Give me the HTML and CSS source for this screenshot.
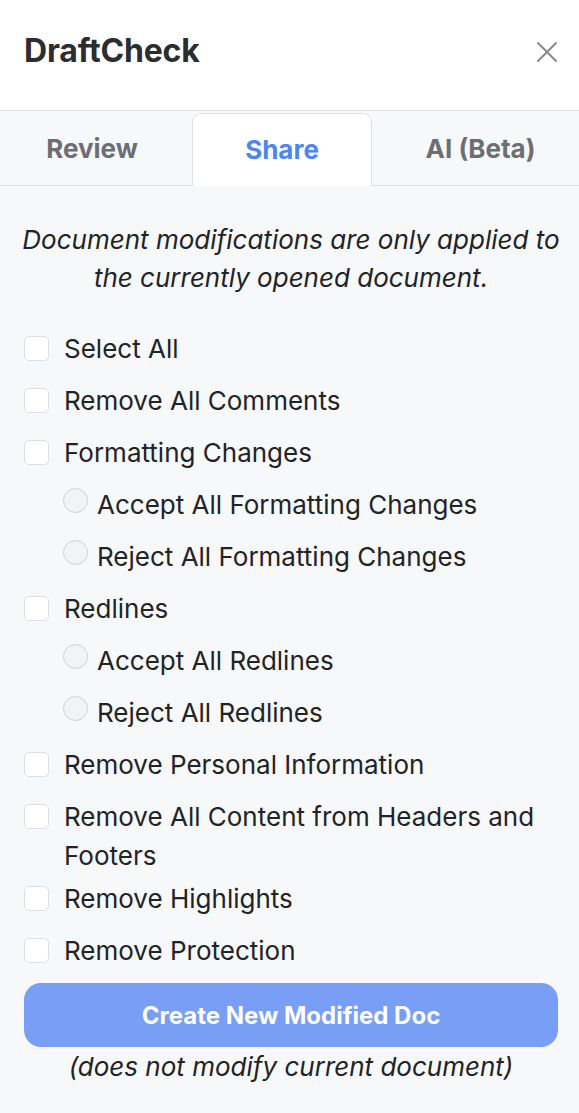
FILE: index.html
```html
<!DOCTYPE html>
<html lang="en">
<head>
<meta charset="utf-8">
<title>DraftCheck</title>
<link rel="stylesheet" href="styles.css">
</head>
<body>
<div class="panel">
  <header class="header">
    <h1 class="title">DraftCheck</h1>
    <button class="close" aria-label="Close">
      <svg width="22" height="22" viewBox="0 0 22 22"><path d="M2 2 L20 20 M20 2 L2 20" stroke="#8a8a8a" stroke-width="2" stroke-linecap="round"/></svg>
    </button>
  </header>
  <nav class="tabs">
    <div class="tab tab-review">Review</div>
    <div class="tab tab-share active">Share</div>
    <div class="tab tab-ai">AI (Beta)</div>
  </nav>
  <main class="content">
    <p class="note">Document modifications are only applied to the currently opened document.</p>
    <ul class="options">
      <li class="opt"><span class="box"></span><span class="label">Select All</span></li>
      <li class="opt"><span class="box"></span><span class="label">Remove All Comments</span></li>
      <li class="opt"><span class="box"></span><span class="label">Formatting Changes</span></li>
      <li class="opt sub"><span class="radio"></span><span class="label">Accept All Formatting Changes</span></li>
      <li class="opt sub"><span class="radio"></span><span class="label">Reject All Formatting Changes</span></li>
      <li class="opt"><span class="box"></span><span class="label">Redlines</span></li>
      <li class="opt sub"><span class="radio"></span><span class="label">Accept All Redlines</span></li>
      <li class="opt sub"><span class="radio"></span><span class="label">Reject All Redlines</span></li>
      <li class="opt"><span class="box"></span><span class="label">Remove Personal Information</span></li>
      <li class="opt wrap"><span class="box"></span><span class="label">Remove All Content from Headers and Footers</span></li>
      <li class="opt"><span class="box"></span><span class="label">Remove Highlights</span></li>
      <li class="opt"><span class="box"></span><span class="label">Remove Protection</span></li>
    </ul>
    <button class="create">Create New Modified Doc</button>
    <p class="foot">(does not modify current document)</p>
  </main>
</div>
</body>
</html>
```
FILE: styles.css
```css
* { box-sizing: border-box; }
html, body { margin: 0; padding: 0; }
body {
  font-family: Inter, "Noto Sans", sans-serif;
  background: #f7f8fa;
  color: #222326;
  width: 579px;
  height: 1113px;
  overflow: hidden;
}
.header {
  height: 111px;
  background: #ffffff;
  border-bottom: 1px solid #dfe1e4;
  display: flex;
  align-items: center;
  justify-content: space-between;
  padding: 0 21px 10px 24px;
}
.title {
  margin: 0;
  font-size: 32px;
  font-weight: 700;
  color: #2b2d31;
  letter-spacing: -0.2px;
}
.close {
  border: 0;
  background: none;
  padding: 0;
  width: 22px;
  height: 22px;
  display: flex;
  margin-top: 4px;
}
.tabs {
  height: 75px;
  display: flex;
  align-items: stretch;
  border-bottom: 1px solid #dfe1e4;
  padding-top: 2px;
}
.tab {
  display: flex;
  align-items: center;
  justify-content: center;
  font-size: 26px;
  font-weight: 700;
  color: #6b6f75;
  padding-bottom: 1px;
}
.tab-review { width: 192px; padding-right: 8px; }
.tab-share { width: 180px; }
.tab-ai { flex: 1; padding-left: 10px; }
.tab.active {
  background: #ffffff;
  color: #4a87f3;
  border: 1px solid #dfe1e4;
  border-bottom: 0;
  border-radius: 9px 9px 0 0;
  margin-bottom: -1px;
}
.content {
  padding: 35px 21px 0 24px;
}
.note {
  margin: 0 -10px;
  font-size: 26px;
  font-style: italic;
  line-height: 38px;
  text-align: center;
  color: #222326;
}
.options {
  list-style: none;
  margin: 32px 0 0;
  padding: 0;
  display: flex;
  flex-direction: column;
  gap: 13px;
}
.opt {
  display: flex;
  align-items: flex-start;
  font-size: 26px;
  line-height: 39px;
  color: #222326;
}
.opt.wrap { margin-bottom: -9px; }
.box {
  flex: none;
  width: 25px;
  height: 25px;
  margin: 7px 15px 0 0;
  background: #ffffff;
  border: 1.5px solid #dcdee2;
  border-radius: 5px;
}
.sub { padding-left: 39px; }
.radio {
  flex: none;
  width: 25px;
  height: 25px;
  margin: 3px 9px 0 0;
  background: #f2f3f5;
  border: 1.5px solid #cfd1d4;
  border-radius: 50%;
}
.create {
  display: block;
  width: 100%;
  height: 64px;
  margin-top: 13px;
  border: 0;
  border-radius: 17px;
  background: #789ef5;
  color: #ffffff;
  font-family: inherit;
  font-size: 24px;
  font-weight: 700;
}
.foot {
  margin: 5px 0 0;
  font-size: 26px;
  font-style: italic;
  line-height: 30px;
  text-align: center;
  color: #222326;
}
```
